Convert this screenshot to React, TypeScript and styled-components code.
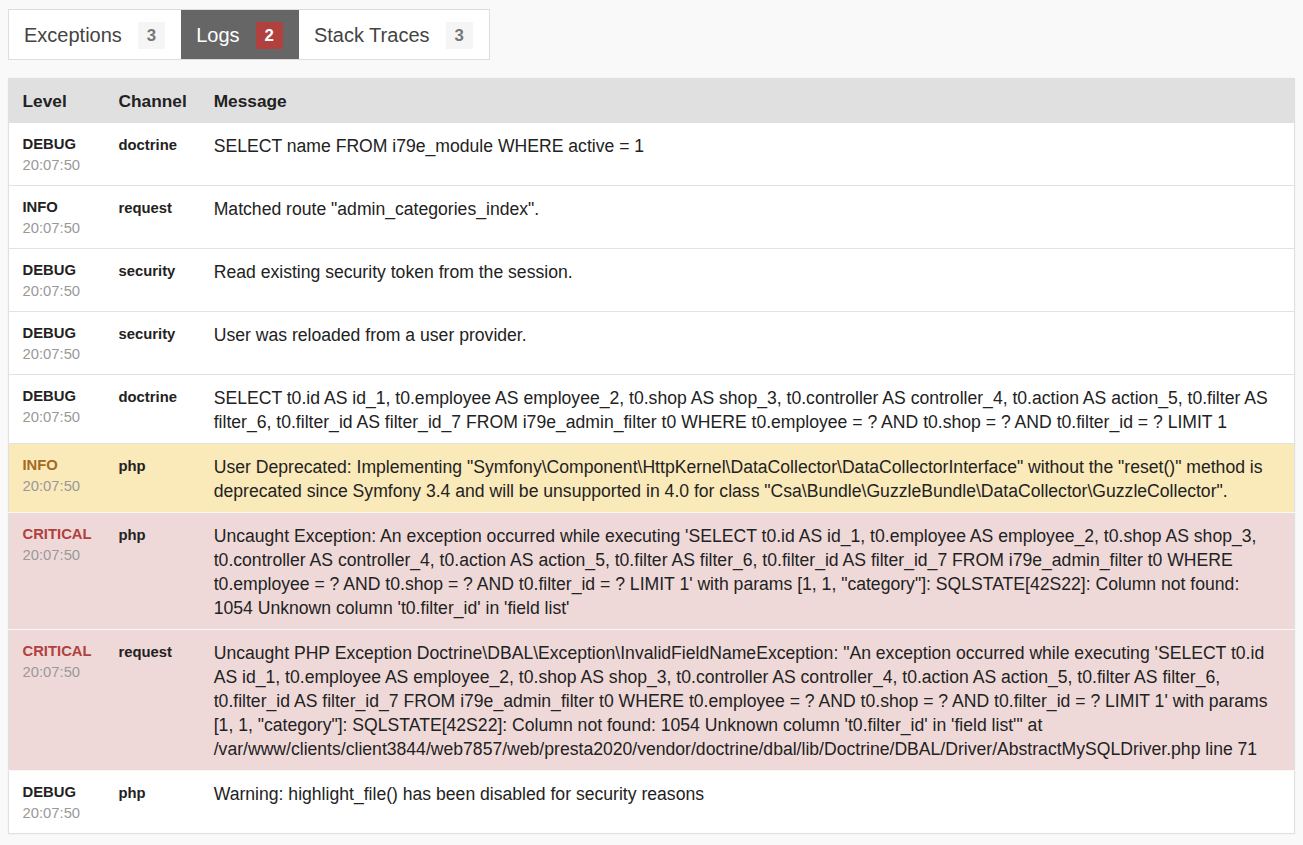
import React from 'react';
import styled, { createGlobalStyle, css } from 'styled-components';

const GlobalStyle = createGlobalStyle`
    html, body {
        margin: 0;
        padding: 0;
        background: #f9f9f9;
    }
    body {
        padding: 9px 8px 8px 8px;
        font-family: "Liberation Sans", Arial, sans-serif;
        color: #222;
    }
`;

type Status = 'normal' | 'warning' | 'error';

interface LogEntry {
    level: string;
    time: string;
    channel: string;
    message: string;
    status: Status;
}

const logs: LogEntry[] = [
    {
        level: 'DEBUG',
        time: '20:07:50',
        channel: 'doctrine',
        message: 'SELECT name FROM i79e_module WHERE active = 1',
        status: 'normal',
    },
    {
        level: 'INFO',
        time: '20:07:50',
        channel: 'request',
        message: 'Matched route "admin_categories_index".',
        status: 'normal',
    },
    {
        level: 'DEBUG',
        time: '20:07:50',
        channel: 'security',
        message: 'Read existing security token from the session.',
        status: 'normal',
    },
    {
        level: 'DEBUG',
        time: '20:07:50',
        channel: 'security',
        message: 'User was reloaded from a user provider.',
        status: 'normal',
    },
    {
        level: 'DEBUG',
        time: '20:07:50',
        channel: 'doctrine',
        message:
            'SELECT t0.id AS id_1, t0.employee AS employee_2, t0.shop AS shop_3, t0.controller AS controller_4, t0.action AS action_5, t0.filter AS filter_6, t0.filter_id AS filter_id_7 FROM i79e_admin_filter t0 WHERE t0.employee = ? AND t0.shop = ? AND t0.filter_id = ? LIMIT 1',
        status: 'normal',
    },
    {
        level: 'INFO',
        time: '20:07:50',
        channel: 'php',
        message:
            'User Deprecated: Implementing "Symfony\\Component\\HttpKernel\\DataCollector\\DataCollectorInterface" without the "reset()" method is deprecated since Symfony 3.4 and will be unsupported in 4.0 for class "Csa\\Bundle\\GuzzleBundle\\DataCollector\\GuzzleCollector".',
        status: 'warning',
    },
    {
        level: 'CRITICAL',
        time: '20:07:50',
        channel: 'php',
        message:
            "Uncaught Exception: An exception occurred while executing 'SELECT t0.id AS id_1, t0.employee AS employee_2, t0.shop AS shop_3, t0.controller AS controller_4, t0.action AS action_5, t0.filter AS filter_6, t0.filter_id AS filter_id_7 FROM i79e_admin_filter t0 WHERE t0.employee = ? AND t0.shop = ? AND t0.filter_id = ? LIMIT 1' with params [1, 1, \"category\"]: SQLSTATE[42S22]: Column not found: 1054 Unknown column 't0.filter_id' in 'field list'",
        status: 'error',
    },
    {
        level: 'CRITICAL',
        time: '20:07:50',
        channel: 'request',
        message:
            "Uncaught PHP Exception Doctrine\\DBAL\\Exception\\InvalidFieldNameException: \"An exception occurred while executing 'SELECT t0.id AS id_1, t0.employee AS employee_2, t0.shop AS shop_3, t0.controller AS controller_4, t0.action AS action_5, t0.filter AS filter_6, t0.filter_id AS filter_id_7 FROM i79e_admin_filter t0 WHERE t0.employee = ? AND t0.shop = ? AND t0.filter_id = ? LIMIT 1' with params [1, 1, \"category\"]: SQLSTATE[42S22]: Column not found: 1054 Unknown column 't0.filter_id' in 'field list'\" at /var/www/clients/client3844/web7857/web/presta2020/vendor/doctrine/dbal/lib/Doctrine/DBAL/Driver/AbstractMySQLDriver.php line 71",
        status: 'error',
    },
    {
        level: 'DEBUG',
        time: '20:07:50',
        channel: 'php',
        message: 'Warning: highlight_file() has been disabled for security reasons',
        status: 'normal',
    },
];

const tabs = [
    { label: 'Exceptions', count: 3, active: false },
    { label: 'Logs', count: 2, active: true },
    { label: 'Stack Traces', count: 3, active: false },
];

const TabNavigation = styled.ul`
    display: inline-flex;
    margin: 0 0 18px 0;
    padding: 0;
    list-style: none;
    border: 1px solid #dddddd;
    background: #fff;
`;

const Tab = styled.li<{ $active: boolean }>`
    display: flex;
    align-items: center;
    padding: 12px 16px 10px 15px;
    font-size: 20px;
    line-height: 27px;
    color: #444;
    cursor: pointer;
    ${({ $active }) =>
        $active &&
        css`
            background: #666;
            color: #fff;
        `}
`;

const Badge = styled.span<{ $active: boolean }>`
    display: inline-block;
    margin-left: 16px;
    min-width: 9px;
    padding: 2px 9px;
    font-size: 16.8px;
    line-height: 23px;
    font-weight: bold;
    text-align: center;
    background: ${({ $active }) => ($active ? '#b0413e' : '#f5f5f5')};
    color: ${({ $active }) => ($active ? '#fff' : '#777')};
`;

const LogTable = styled.table`
    width: 100%;
    border-collapse: collapse;
    background: #fff;
    border: 1px solid #e0e0e0;
    box-shadow: 0 0 1px rgba(128, 128, 128, 0.2);
    font-size: 17.6px;
    line-height: 24px;
`;

const HeadCell = styled.th`
    padding: 10px 13.5px;
    text-align: left;
    vertical-align: bottom;
    font-size: 17.3px;
    font-weight: bold;
    background: #e0e0e0;
    color: #222;
    white-space: nowrap;
`;

const statusBg: Record<Status, string> = {
    normal: '#fff',
    warning: 'rgba(240, 181, 24, 0.3)',
    error: 'rgba(176, 65, 62, 0.2)',
};

const Row = styled.tr<{ $status: Status }>`
    background: ${({ $status }) => statusBg[$status]};
    border-bottom: 1px solid
        ${({ $status }) => ($status === 'normal' ? '#e3e3e3' : '#f7f7f7')};

    &:last-child {
        border-bottom: 0;
    }
`;

const Cell = styled.td`
    padding: 11px 13.5px 9px;
    vertical-align: top;
    color: #222;
`;

const LevelCell = styled(Cell)`
    font-size: 14.8px;
    line-height: 21px;
    white-space: nowrap;
`;

const levelColor: Record<Status, string> = {
    normal: '#222',
    warning: '#a46a1f',
    error: '#b0413e',
};

const Level = styled.span<{ $status: Status }>`
    display: block;
    font-weight: bold;
    color: ${({ $status }) => levelColor[$status]};
`;

const Time = styled.span`
    display: block;
    color: #999;
`;

const ChannelCell = styled(Cell)`
    font-size: 14.8px;
    line-height: 21px;
    font-weight: bold;
    white-space: nowrap;
    padding-top: 12px;
`;

const MessageCell = styled(Cell)`
    padding-right: 20px;
`;

export default function App() {
    return (
        <>
            <GlobalStyle />
            <TabNavigation>
                {tabs.map((tab) => (
                    <Tab key={tab.label} $active={tab.active}>
                        {tab.label}
                        <Badge $active={tab.active}>{tab.count}</Badge>
                    </Tab>
                ))}
            </TabNavigation>
            <LogTable>
                <thead>
                    <tr>
                        <HeadCell>Level</HeadCell>
                        <HeadCell>Channel</HeadCell>
                        <HeadCell style={{ width: '100%' }}>Message</HeadCell>
                    </tr>
                </thead>
                <tbody>
                    {logs.map((log, i) => (
                        <Row key={i} $status={log.status}>
                            <LevelCell>
                                <Level $status={log.status}>{log.level}</Level>
                                <Time>{log.time}</Time>
                            </LevelCell>
                            <ChannelCell>{log.channel}</ChannelCell>
                            <MessageCell>{log.message}</MessageCell>
                        </Row>
                    ))}
                </tbody>
            </LogTable>
        </>
    );
}
